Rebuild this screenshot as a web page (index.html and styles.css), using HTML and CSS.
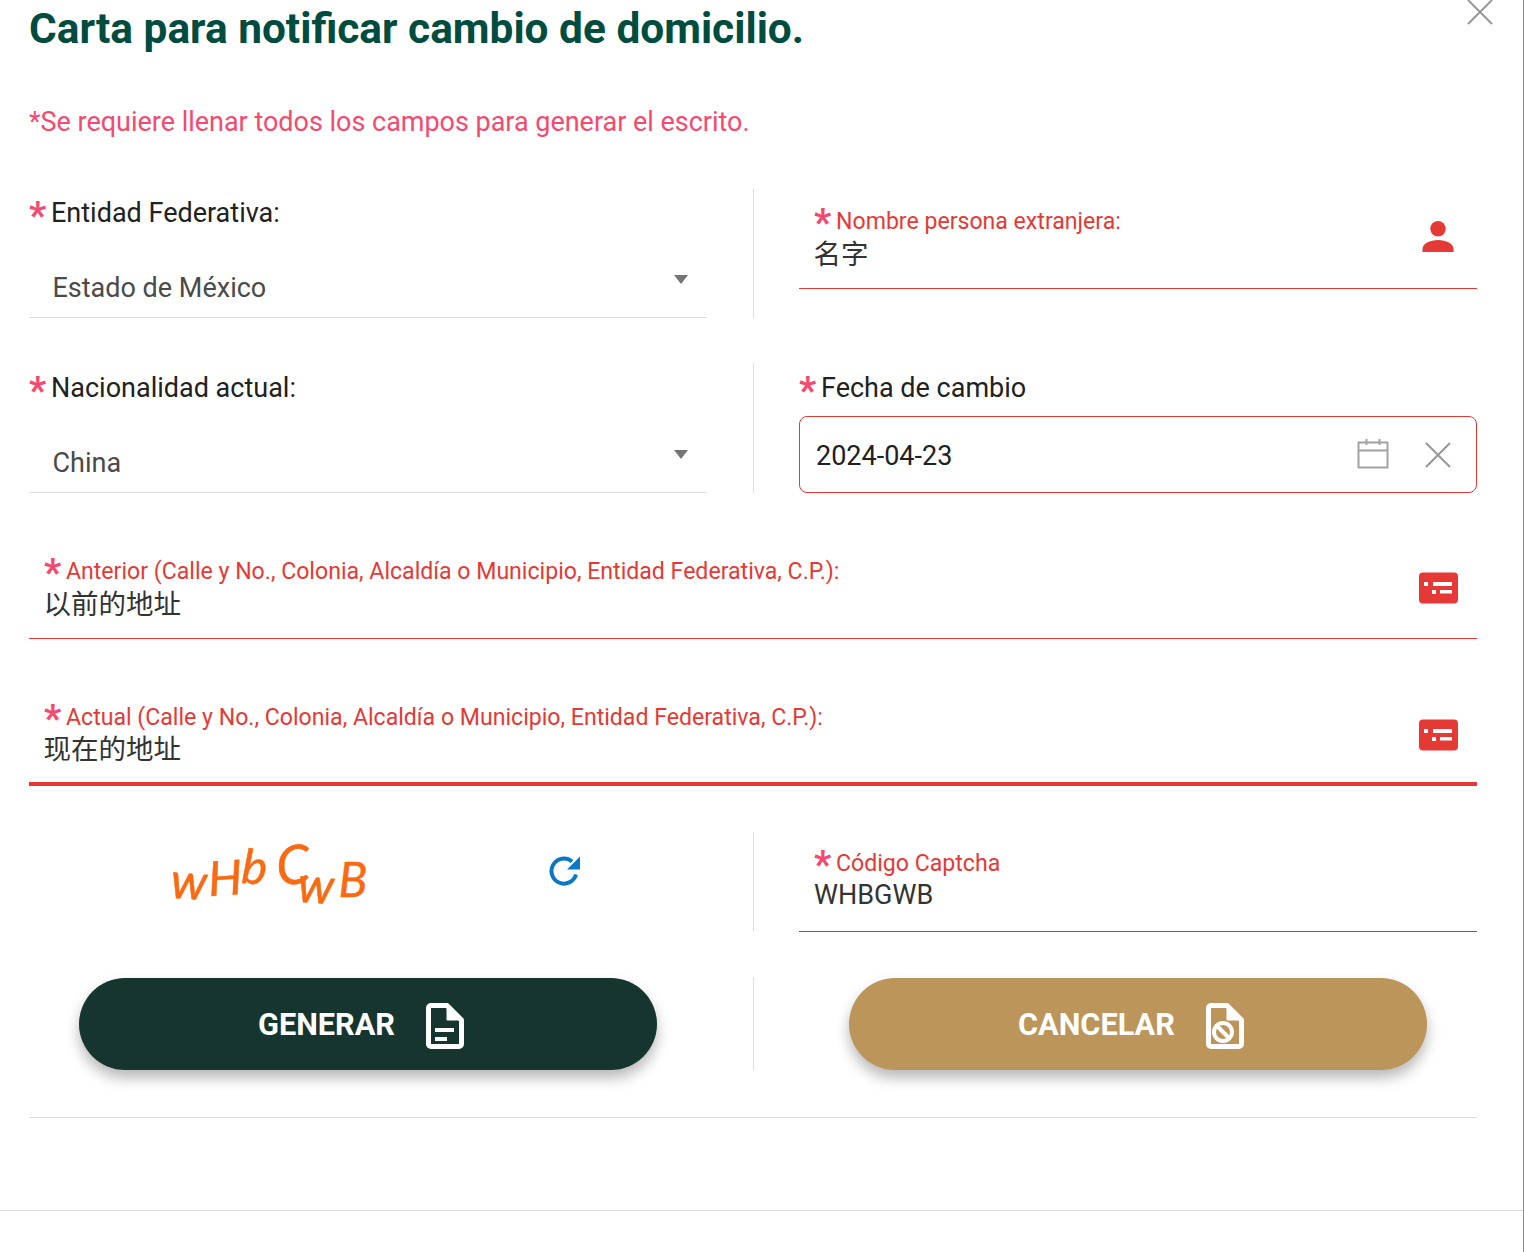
FILE: index.html
```html
<!DOCTYPE html>
<html lang="es">
<head>
<meta charset="utf-8">
<title>Carta para notificar cambio de domicilio</title>
<link rel="stylesheet" href="styles.css">
</head>
<body>
<div class="modal">
  <button class="close" aria-label="Cerrar"><svg width="26" height="26" viewBox="0 0 26 26"><path d="M1 1 25 25M25 1 1 25" class="x"/></svg></button>
  <div class="content">
    <h1 class="title">Carta para notificar cambio de domicilio.</h1>
    <p class="notice">*Se requiere llenar todos los campos para generar el escrito.</p>

    <div class="row row-a">
      <div class="col">
        <div class="label-lg"><span class="star">*</span>Entidad Federativa:</div>
        <div class="select"><span>Estado de México</span><i class="caret"></i></div>
      </div>
      <div class="divider"></div>
      <div class="col">
        <div class="float float-short">
          <div class="float-text">
            <div class="label-sm"><span class="star">*</span>Nombre persona extranjera:</div>
            <div class="value value-cjk">名字</div>
          </div>
          <svg class="icon-user" width="32" height="32" viewBox="0 0 32 32"><circle cx="16" cy="7.700" r="7.700"/><path d="M0.500 31V28C0.500 22.500 8 19 16 19S31.500 22.500 31.500 28V31Z"/></svg>
        </div>
      </div>
    </div>

    <div class="row row-b">
      <div class="col">
        <div class="label-lg"><span class="star">*</span>Nacionalidad actual:</div>
        <div class="select"><span>China</span><i class="caret"></i></div>
      </div>
      <div class="divider"></div>
      <div class="col">
        <div class="label-lg"><span class="star">*</span>Fecha de cambio</div>
        <div class="date">
          <span class="date-value">2024-04-23</span>
          <svg class="cal" width="32" height="30" viewBox="0 0 32 30"><path d="M1.500 3.500H30.500V28.500H1.500ZM1.500 11.500H30.500M9.500 0V6M22.500 0V6"/></svg>
          <svg class="date-x" width="26" height="26" viewBox="0 0 26 26"><path d="M1 1 25 25M25 1 1 25" class="x"/></svg>
        </div>
      </div>
    </div>

    <div class="float float-wide float-prev">
      <div class="float-text">
        <div class="label-sm"><span class="star">*</span>Anterior (Calle y No., Colonia, Alcaldía o Municipio, Entidad Federativa, C.P.):</div>
        <div class="value value-cjk">以前的地址</div>
      </div>
      <svg class="icon-card" width="40" height="32" viewBox="0 0 40 32"><rect x="1" y="0.500" width="39" height="31" rx="4"/><path class="cut" d="M6 10H10V14H6ZM15 10H34V14H15ZM14 18H18V22H14ZM22 18H34V21.500H22Z"/></svg>
    </div>

    <div class="float float-wide float-active">
      <div class="float-text">
        <div class="label-sm"><span class="star">*</span>Actual (Calle y No., Colonia, Alcaldía o Municipio, Entidad Federativa, C.P.):</div>
        <div class="value value-cjk">现在的地址</div>
      </div>
      <svg class="icon-card" width="40" height="32" viewBox="0 0 40 32"><rect x="1" y="0.500" width="39" height="31" rx="4"/><path class="cut" d="M6 10H10V14H6ZM15 10H34V14H15ZM14 18H18V22H14ZM22 18H34V21.500H22Z"/></svg>
    </div>

    <div class="row row-c">
      <div class="col captcha-col">
        <div class="captcha">
          <span class="c1">w</span><span class="c2">H</span><span class="c3">b</span><span class="c4">C</span><span class="c5">w</span><span class="c6">B</span>
        </div>
        <svg class="refresh" width="32" height="32" viewBox="0 0 32 32"><path d="M27 19.500A12.500 12.500 0 1 1 23 6.500" class="refresh-arc"/><path d="M31 1.500V14.500H18Z" class="refresh-head"/></svg>
      </div>
      <div class="divider"></div>
      <div class="col">
        <div class="float float-captcha">
          <div class="float-text">
            <div class="label-sm"><span class="star">*</span>Código Captcha</div>
            <div class="value">WHBGWB</div>
          </div>
        </div>
      </div>
    </div>

    <div class="row row-d">
      <div class="col btn-col">
        <button class="btn btn-green">GENERAR
          <svg class="btn-icon" width="38" height="46" viewBox="0 0 38 46"><path class="doc" d="M5 2.500H21L35.500 17V41A2.500 2.500 0 0 1 33 43.500H5A2.500 2.500 0 0 1 2.500 41V5A2.500 2.500 0 0 1 5 2.500Z"/><path class="doc-fold" d="M21 3V17H35Z"/><path class="doc-lines" d="M9 27H28M9 36H21"/></svg>
        </button>
      </div>
      <div class="divider"></div>
      <div class="col btn-col">
        <button class="btn btn-gold">CANCELAR
          <svg class="btn-icon" width="38" height="46" viewBox="0 0 38 46"><path class="doc" d="M5 2.500H21L35.500 17V41A2.500 2.500 0 0 1 33 43.500H5A2.500 2.500 0 0 1 2.500 41V5A2.500 2.500 0 0 1 5 2.500Z"/><path class="doc-fold" d="M21 3V17H35Z"/><circle class="doc-ban" cx="17" cy="29" r="9"/><path class="doc-ban" d="M10.500 22.500 23.500 35.500"/></svg>
        </button>
      </div>
    </div>

    <div class="rule"></div>
  </div>
  <div class="footer"></div>
</div>
</body>
</html>
```
FILE: styles.css
```css
* { box-sizing: border-box; }
html, body { margin: 0; height: 100%; background: #fff; overflow: hidden; }
body { font-family: Roboto, "Noto Sans CJK SC", sans-serif; color: #212121; }
.modal { position: relative; width: 1524px; height: 1252px; border-right: 1px solid #8a8a8a; overflow: hidden; }
.close { position: absolute; top: -1px; right: 30px; width: 26px; height: 26px; padding: 0; border: 0; background: none; }
.x { fill: none; stroke: #979797; stroke-width: 2; }
.content { width: 1448px; margin-left: 29px; }
.title { margin: 0; height: 57px; font-size: 42.4px; line-height: 58px; font-weight: 700; color: #004d40; }
.notice { margin: 51px 0 0; height: 28px; font-size: 26.96px; line-height: 28px; color: #f44a70; }
.row { display: grid; grid-template-columns: 678px 92px 678px; }
.col { min-width: 0; }
.divider { width: 1px; margin-left: 46px; background: #e0e0e0; }
.row-a { margin-top: 52px; height: 130px; }
.row-b { margin-top: 45px; height: 129px; }
.row-c { margin-top: 46px; height: 100px; }
.row-d { margin-top: 45px; height: 93px; }
.star { color: #f44a70; font-size: 38px; font-weight: 700; line-height: 20px; display: inline-block; width: 22px; height: 20px; vertical-align: -7px; }
.label-lg { font-size: 27px; line-height: 32px; height: 32px; margin-top: 9px; }
.select { display: flex; justify-content: space-between; align-items: flex-end; height: 89px; padding: 0 19px 0 23.500px; border-bottom: 1px solid #ddd; font-size: 27px; color: #4a4a4a; }
.select span { line-height: 30px; margin-bottom: 14px; }
.caret { width: 0; height: 0; margin-bottom: 33px; border-left: 7px solid transparent; border-right: 7px solid transparent; border-top: 9px solid #757575; }
.date { display: flex; align-items: center; height: 77px; margin-top: 12px; padding: 0 25px 0 16px; border: 1px solid #e53935; border-radius: 8px; font-size: 27px; }
.date-value { flex: 1; padding-top: 2px; }
.cal { fill: none; stroke: #a3a3a3; stroke-width: 2; margin: 0 36px 2px 0; }
.float { display: flex; align-items: flex-start; justify-content: space-between; border-bottom: 1px solid #e53935; padding: 0 19px 0 15px; }
.float-text { min-width: 0; }
.float-short { height: 101px; padding-top: 20px; padding-right: 22px; }
.float-short .value { margin-top: 1px; }
.float-wide { height: 97px; margin-top: 50px; padding-top: 16px; }
.float-prev .value { margin-top: 1px; }
.float-active { height: 98px; margin-top: 49px; border-bottom: 4px solid #e53935; }
.float-captcha { height: 100px; padding-top: 18px; border-bottom-color: #d32f2f; }
.float-captcha .value { margin-top: -1px; }
.label-sm { font-size: 23.1px; line-height: 28px; height: 28px; color: #e53935; white-space: nowrap; }
.value { font-size: 27px; line-height: 36px; color: #333; }
.value-cjk { font-size: 27.5px; margin-left: -0.500px; }
.icon-user { fill: #e53935; margin-top: 13px; margin-right: 1px; }
.icon-card { margin-top: 14px; }
.icon-card rect { fill: #e53935; }
.cut { fill: #fff; }
.float-active .icon-card { margin-top: 15px; }
.captcha-col { display: flex; align-items: flex-start; }
.captcha { width: 520px; height: 100px; padding: 0 0 0 142px; font-family: Lato, sans-serif; font-style: italic; color: #f96a12; white-space: nowrap; line-height: 100px; -webkit-text-stroke: 0.5px #f96a12; }
.captcha span { display: inline-block; }
.c1 { font-size: 50px; transform: translate(0, -3px) rotate(4deg); }
.c2 { font-size: 48px; transform: translate(1px, -7px) rotate(-4deg); }
.c3 { font-size: 48px; transform: translate(1px, -18px) rotate(4deg); }
.c4 { font-size: 54px; transform: translate(9px, -18px) rotate(-6deg); }
.c5 { font-size: 50px; transform: translate(-2px, 1px) rotate(4deg); }
.c6 { font-size: 48px; transform: translate(2px, -5px); }
.refresh { margin-top: 23px; }
.refresh-arc { fill: none; stroke: #0a78c2; stroke-width: 4; }
.refresh-head { fill: #0a78c2; }
.btn-col { display: flex; justify-content: center; padding-top: 1px; }
.btn { display: flex; align-items: center; justify-content: flex-start; gap: 31px; width: 578px; height: 92px; padding: 0 0 0 179px; border: 0; border-radius: 46px; color: #fff; font: 700 30.700px Roboto, sans-serif; box-shadow: 0 8px 14px rgba(0,0,0,.28); }
.btn-green { background: #16352f; }
.btn-gold { background: #bb955a; padding-left: 169px; }
.btn-icon { margin-top: 3px; }
.doc { fill: none; stroke: #fff; stroke-width: 5; stroke-linejoin: round; }
.doc-fold { fill: #fff; stroke: #fff; stroke-width: 1; }
.doc-lines { stroke: #fff; stroke-width: 4; }
.doc-ban { fill: none; stroke: #fff; stroke-width: 4; }
.rule { margin-top: 47px; height: 1px; background: #ddd; }
.footer { margin-top: 92px; height: 1px; background: #ddd; }
```
